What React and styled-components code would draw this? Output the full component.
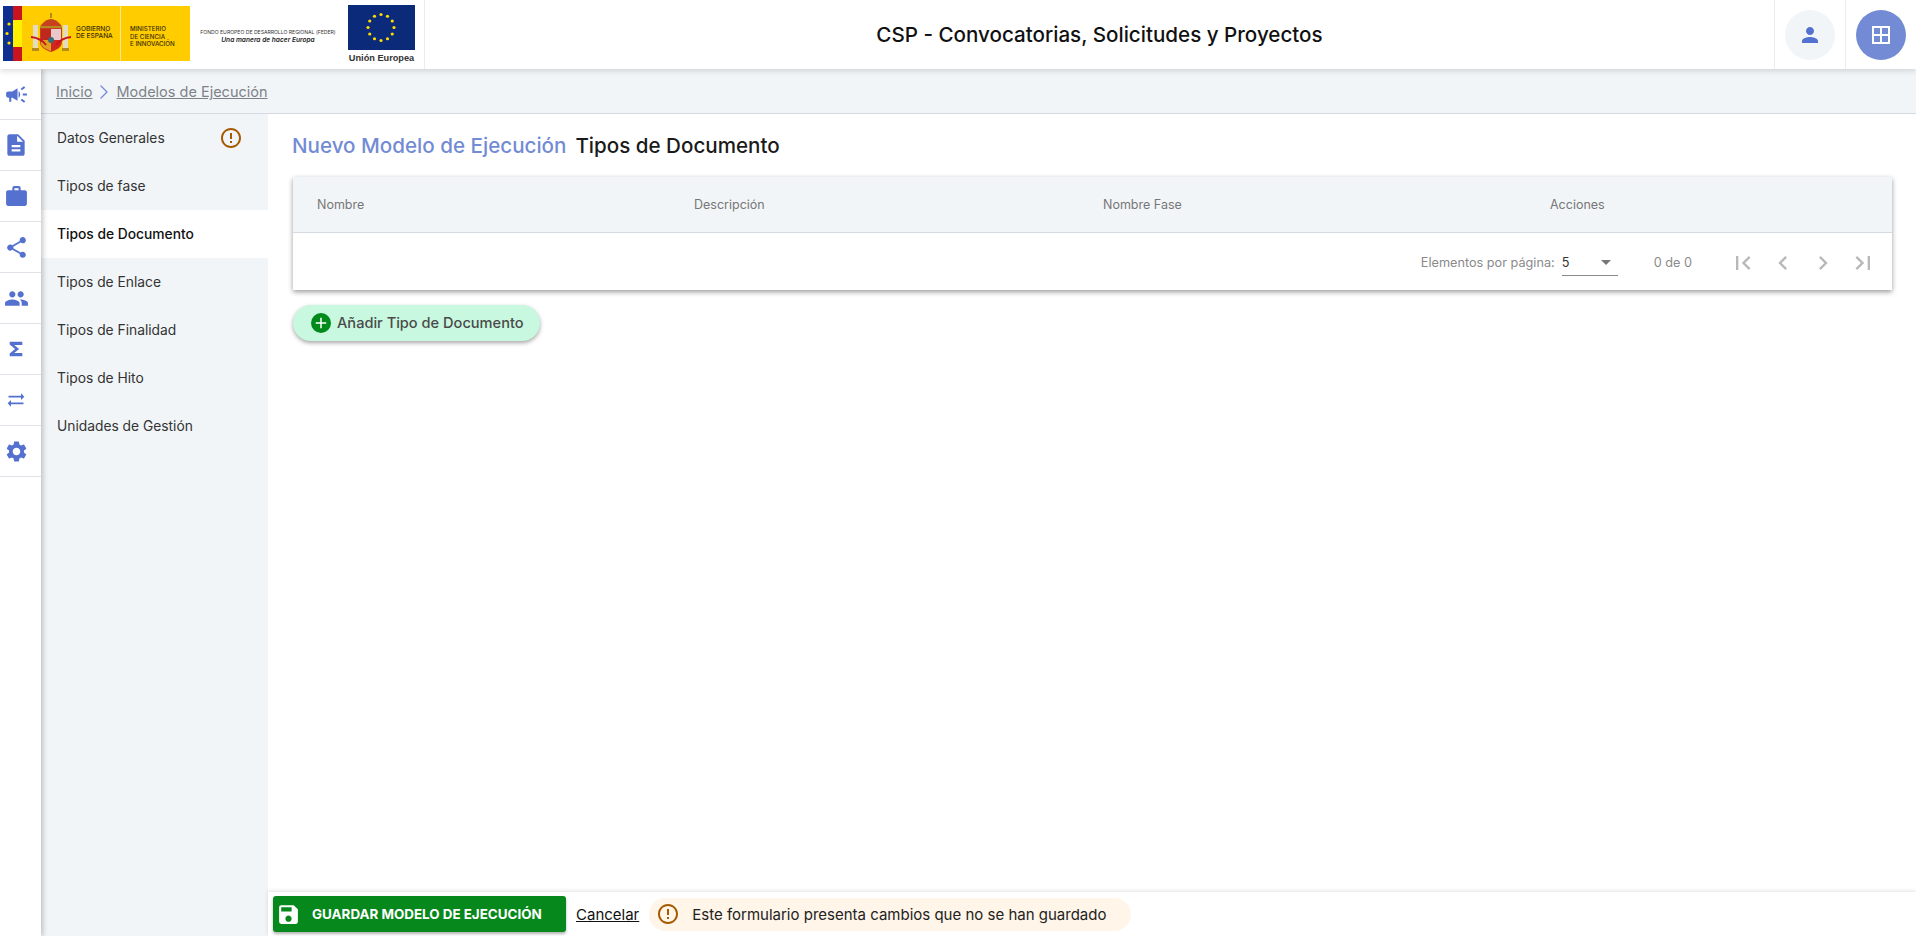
import React from 'react';
import styled, { createGlobalStyle } from 'styled-components';
import {
  MdCampaign, MdDescription, MdWork, MdShare, MdPeople, MdSyncAlt, MdSettings,
  MdPerson, MdBorderAll, MdSave, MdAdd, MdErrorOutline, MdFirstPage, MdLastPage,
  MdChevronLeft, MdChevronRight, MdArrowDropDown,
} from 'react-icons/md';
import { ChevronRight } from 'lucide-react';

const BLUE = '#5471cf';
const FONT = '"Inter", "Noto Sans", sans-serif';

const GlobalStyle = createGlobalStyle`
  html, body { margin: 0; padding: 0; height: 100%; overflow: hidden; }
  body { background: #fff; font-family: ${FONT}; color: #1a1a1a; }
  #root { height: 100%; }
  * { box-sizing: border-box; }
`;

const Page = styled.div`
  width: 1916px;
  height: 936px;
  display: flex;
  flex-direction: column;
`;

const Header = styled.header`
  height: 69px;
  flex: none;
  display: flex;
  position: relative;
  z-index: 3;
  background: #fff;
  box-shadow: 0 2px 6px rgba(0, 0, 0, 0.14);
`;

const Logos = styled.div`
  width: 425px;
  flex: none;
  display: flex;
  align-items: flex-start;
  padding: 6px 0 0 3px;
  border-right: 1px solid #ececec;
`;

const SpainSvg = styled.svg`
  flex: none;
  display: block;
`;

const Fund = styled.div`
  width: 156px;
  flex: none;
  margin-top: 22px;
  text-align: center;
  color: #333;
  font-size: 5.1px;
  line-height: 8px;
  white-space: nowrap;
  em {
    display: block;
    font-size: 6.6px;
    font-weight: 600;
    color: #222;
  }
`;

const EuLogo = styled.div`
  width: 67px;
  flex: none;
  margin: -1px 0 0 2px;
  span {
    display: block;
    margin-top: 3px;
    text-align: center;
    font-size: 9.2px;
    font-weight: 700;
    color: #333;
    font-family: "Liberation Sans", sans-serif;
    white-space: nowrap;
  }
  svg { display: block; }
`;

const AppTitle = styled.h1`
  flex: 1;
  margin: 0;
  text-align: center;
  line-height: 69px;
  font-size: 20.6px;
  font-weight: 500;
  color: #111;
`;

const HeaderCell = styled.div`
  flex: none;
  width: ${p => p.$w}px;
  display: flex;
  justify-content: center;
  align-items: center;
  border-left: 1px solid #ececec;
`;

const RoundButton = styled.div`
  width: 50px;
  height: 50px;
  border-radius: 50%;
  display: flex;
  justify-content: center;
  align-items: center;
  background: ${p => (p.$solid ? '#738bd4' : '#f2f5f8')};
  color: ${p => (p.$solid ? '#fff' : BLUE)};
  font-size: 24px;
`;

const Body = styled.div`
  flex: 1;
  min-height: 0;
  display: flex;
`;

const Rail = styled.nav`
  width: 41px;
  flex: none;
  position: relative;
  z-index: 2;
  background: #fff;
  box-shadow: 2px 0 5px rgba(0, 0, 0, 0.22);
`;

const RailItem = styled.div`
  height: 51px;
  padding-right: 9px;
  display: flex;
  justify-content: center;
  align-items: center;
  border-bottom: 1px solid #dfe2e6;
  color: ${BLUE};
  font-size: ${p => p.$size || 25}px;
`;

const Main = styled.div`
  flex: 1;
  min-width: 0;
  display: flex;
  flex-direction: column;
`;

const Breadcrumb = styled.div`
  height: 45px;
  flex: none;
  display: flex;
  align-items: center;
  padding: 1px 0 0 15px;
  background: #f2f5f8;
  border-bottom: 1px solid #d5dae0;
  color: #7d8288;
  font-size: 14.5px;
  a { color: inherit; text-decoration: underline; }
  svg { color: #738bd4; }
`;

const Content = styled.div`
  flex: 1;
  min-height: 0;
  display: flex;
`;

const SideMenu = styled.aside`
  width: 227px;
  flex: none;
  background: #f2f5f8;
`;

const MenuItem = styled.div`
  height: 48px;
  display: flex;
  align-items: center;
  justify-content: space-between;
  padding: 0 25px 1px 16px;
  font-size: 13.8px;
  font-weight: ${p => (p.$active ? 500 : 400)};
  color: ${p => (p.$active ? '#111' : '#333')};
  background: ${p => (p.$active ? '#fff' : 'transparent')};
  svg { color: #a65a00; font-size: 24px; }
`;

const Panel = styled.main`
  flex: 1;
  min-width: 0;
  display: flex;
  flex-direction: column;
`;

const Scroll = styled.div`
  flex: 1;
  min-height: 0;
  padding: 6px 24px 0 25px;
`;

const Title = styled.div`
  height: 50px;
  margin-bottom: 7px;
  display: flex;
  align-items: center;
  gap: 9px;
  font-size: 20.6px;
  font-weight: 500;
  span:first-child { color: #738bd4; margin-left: -1px; }
`;

const Card = styled.section`
  background: #fff;
  box-shadow: 0 2px 5px rgba(0, 0, 0, 0.4);
`;

const HeadRow = styled.div`
  height: 56px;
  display: grid;
  grid-template-columns: 377px 409px 447px 1fr;
  align-items: center;
  padding-left: 24px;
  background: #f2f5f8;
  border-bottom: 1px solid #d5dae0;
  color: #777;
  font-size: 12.5px;
`;

const Pager = styled.div`
  height: 57px;
  display: flex;
  align-items: center;
  justify-content: flex-end;
  padding: 2px 9px 0 0;
  color: #8a8a8a;
  font-size: 12.7px;
`;

const PageSelect = styled.div`
  width: 56px;
  height: 26px;
  margin: 0 36px 0 7px;
  display: flex;
  align-items: center;
  justify-content: space-between;
  border-bottom: 1px solid #8a8a8a;
  color: #333;
  svg { color: #777; font-size: 24px; }
`;

const PageButton = styled.div`
  width: 40px;
  display: flex;
  justify-content: center;
  color: #b8b8b8;
  font-size: 28px;
`;

const Range = styled.span`
  margin-right: 31px;
`;

const AddButton = styled.button`
  height: 36px;
  margin-top: 15px;
  padding: 0 16px 0 18px;
  display: flex;
  align-items: center;
  gap: 6px;
  border: 0;
  border-radius: 18px;
  background: #c8f8df;
  box-shadow: 0 2px 4px rgba(0, 0, 0, 0.35);
  color: #4a4a4a;
  font-family: ${FONT};
  font-size: 14.6px;
  font-weight: 500;
  white-space: nowrap;
`;

const PlusIcon = styled.span`
  width: 20px;
  height: 20px;
  border-radius: 50%;
  display: flex;
  justify-content: center;
  align-items: center;
  background: #008a1c;
  color: #fff;
  font-size: 18px;
`;

const Footer = styled.footer`
  height: 44px;
  flex: none;
  display: flex;
  align-items: center;
  padding-left: 5px;
  box-shadow: 0 -1px 4px rgba(0, 0, 0, 0.12);
`;

const SaveButton = styled.button`
  width: 293px;
  height: 36px;
  flex: none;
  display: flex;
  align-items: center;
  gap: 11px;
  padding: 0 3px;
  border: 0;
  border-radius: 3px;
  background: #07881c;
  box-shadow: 0 2px 3px rgba(0, 0, 0, 0.3);
  color: #fff;
  font-family: ${FONT};
  font-size: 13.4px;
  font-weight: 700;
  white-space: nowrap;
  svg { font-size: 25px; flex: none; }
`;

const Cancel = styled.a`
  margin: 0 10px;
  color: #111;
  font-size: 15px;
  text-decoration: underline;
`;

const Warning = styled.div`
  height: 33px;
  display: flex;
  align-items: center;
  gap: 12px;
  padding: 0 25px 0 7px;
  border-radius: 17px;
  background: #fff5e8;
  color: #222;
  font-size: 15px;
  white-space: nowrap;
  svg { color: #a65a00; font-size: 24px; }
`;

const LogoText = styled.text`
  font-family: "Inter", sans-serif;
  font-size: ${p => p.$size}px;
  font-weight: 500;
  fill: #3a2e00;
`;

function SpainLogo() {
  return (
    <SpainSvg width="187" height="55" viewBox="0 0 187 55">
      <rect width="187" height="55" fill="#ffcc00" />
      <rect width="10" height="55" fill="#0d2f8f" />
      <rect x="10" width="9" height="55" fill="#c8141e" />
      <rect x="10" y="14" width="9" height="27" fill="#fff000" />
      <circle cx="6" cy="18" r="1.600" fill="#ffe000" />
      <circle cx="4" cy="27.500" r="1.600" fill="#ffe000" />
      <circle cx="6" cy="37" r="1.600" fill="#ffe000" />
      <rect x="117" width="1" height="55" fill="#f5e6a0" />
      {/* columnas */}
      <rect x="30" y="19" width="5" height="25" fill="#e4dcc0" />
      <rect x="60" y="19" width="5" height="25" fill="#e4dcc0" />
      <rect x="29" y="42" width="7" height="3" fill="#b58a1e" />
      <rect x="59" y="42" width="7" height="3" fill="#b58a1e" />
      {/* escudo */}
      <path d="M37 22h22v14c0 5-5 8-11 10-6-2-11-5-11-10z" fill="#c8411e" />
      <rect x="48" y="23" width="10" height="11" fill="#e8c8c8" />
      <rect x="38" y="23" width="10" height="11" fill="#c0281e" />
      <path d="M48 34h10v3c0 3-3 6-10 8z" fill="#d0281e" />
      <path d="M38 34h10v11c-6-2-10-5-10-8z" fill="#e0a020" />
      <circle cx="48" cy="34" r="3" fill="#3a6a7a" />
      {/* corona */}
      <path d="M38 19q10-12 20 0l1 3h-22z" fill="#c8411e" />
      <rect x="37" y="20" width="22" height="2" fill="#b58a1e" />
      <rect x="47" y="7" width="2" height="5" fill="#b58a1e" />
      {/* cintas */}
      <path d="M28 31q10 1 15 8M68 31q-10 1-15 8" stroke="#c8141e" strokeWidth="2" fill="none" />
      <LogoText x="73" y="25" $size={6.600}>GOBIERNO</LogoText>
      <LogoText x="73" y="32" $size={6.600}>DE ESPAÑA</LogoText>
      <LogoText x="127" y="25" $size={6.200}>MINISTERIO</LogoText>
      <LogoText x="127" y="32.500" $size={6.200}>DE CIENCIA</LogoText>
      <LogoText x="127" y="40" $size={6.200}>E INNOVACIÓN</LogoText>
    </SpainSvg>
  );
}

function EuFlag() {
  const stars = Array.from({ length: 12 }, (_, i) => {
    const a = (i * Math.PI) / 6;
    return <circle key={i} cx={33 + 13 * Math.sin(a)} cy={22.5 + 13 * Math.cos(a)} r="1.600" fill="#ffdd00" />;
  });
  return (
    <svg width="67" height="45" viewBox="0 0 67 45">
      <rect width="67" height="45" fill="#0b2a7a" />
      {stars}
    </svg>
  );
}

function SigmaIcon() {
  return (
    <svg width="18" height="18" viewBox="0 0 20 20">
      <path d="M3 2h14v3.500H8l5.500 4.500L8 14.500h9V18H3v-3l6-5-6-5z" fill="currentColor" />
    </svg>
  );
}

const railIcons = [
  { icon: <MdCampaign /> },
  { icon: <MdDescription />, size: 26 },
  { icon: <MdWork /> },
  { icon: <MdShare /> },
  { icon: <MdPeople /> },
  { icon: <SigmaIcon /> },
  { icon: <MdSyncAlt />, size: 20 },
  { icon: <MdSettings /> },
];

const menu = ['Datos Generales', 'Tipos de fase', 'Tipos de Documento', 'Tipos de Enlace', 'Tipos de Finalidad', 'Tipos de Hito', 'Unidades de Gestión'];

export default function App() {
  return (
    <Page>
      <GlobalStyle />
      <Header>
        <Logos>
          <SpainLogo />
          <Fund>
            FONDO EUROPEO DE DESARROLLO REGIONAL (FEDER)
            <em>Una manera de hacer Europa</em>
          </Fund>
          <EuLogo>
            <EuFlag />
            <span>Unión Europea</span>
          </EuLogo>
        </Logos>
        <AppTitle>CSP - Convocatorias, Solicitudes y Proyectos</AppTitle>
        <HeaderCell $w={71}><RoundButton><MdPerson /></RoundButton></HeaderCell>
        <HeaderCell $w={71}><RoundButton $solid><MdBorderAll /></RoundButton></HeaderCell>
      </Header>
      <Body>
        <Rail>
          {railIcons.map((item, i) => <RailItem key={i} $size={item.size}>{item.icon}</RailItem>)}
        </Rail>
        <Main>
          <Breadcrumb>
            <a>Inicio</a>
            <ChevronRight size={24} strokeWidth={1.300} />
            <a>Modelos de Ejecución</a>
          </Breadcrumb>
          <Content>
            <SideMenu>
              {menu.map((label, i) => (
                <MenuItem key={label} $active={i === 2}>
                  {label}
                  {i === 0 && <MdErrorOutline />}
                </MenuItem>
              ))}
            </SideMenu>
            <Panel>
              <Scroll>
                <Title>
                  <span>Nuevo Modelo de Ejecución</span>
                  <span>Tipos de Documento</span>
                </Title>
                <Card>
                  <HeadRow>
                    <span>Nombre</span>
                    <span>Descripción</span>
                    <span>Nombre Fase</span>
                    <span>Acciones</span>
                  </HeadRow>
                  <Pager>
                    Elementos por página:
                    <PageSelect>5<MdArrowDropDown /></PageSelect>
                    <Range>0 de 0</Range>
                    <PageButton><MdFirstPage /></PageButton>
                    <PageButton><MdChevronLeft /></PageButton>
                    <PageButton><MdChevronRight /></PageButton>
                    <PageButton><MdLastPage /></PageButton>
                  </Pager>
                </Card>
                <AddButton>
                  <PlusIcon><MdAdd /></PlusIcon>
                  Añadir Tipo de Documento
                </AddButton>
              </Scroll>
              <Footer>
                <SaveButton><MdSave />GUARDAR MODELO DE EJECUCIÓN</SaveButton>
                <Cancel>Cancelar</Cancel>
                <Warning><MdErrorOutline />Este formulario presenta cambios que no se han guardado</Warning>
              </Footer>
            </Panel>
          </Content>
        </Main>
      </Body>
    </Page>
  );
}
